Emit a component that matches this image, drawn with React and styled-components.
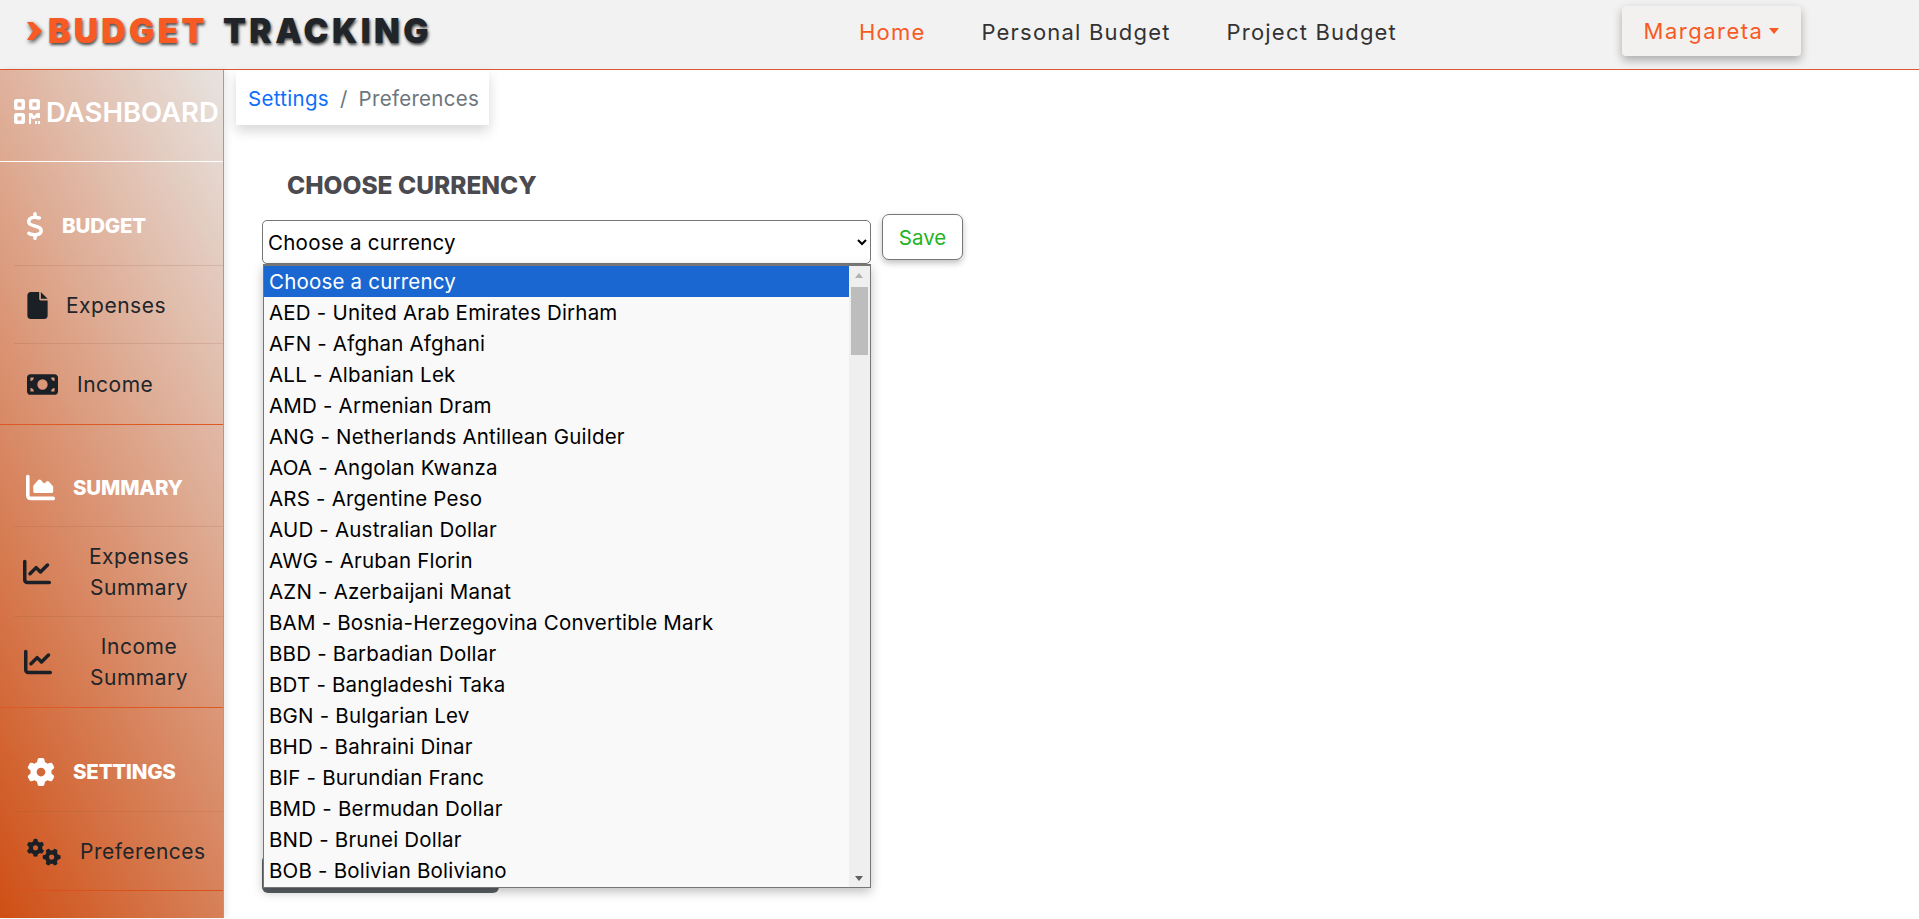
import React from 'react'
import styled, { createGlobalStyle } from 'styled-components'
import { FaDollarSign, FaFile, FaMoneyBill, FaChartArea, FaChartLine, FaGear, FaGears } from 'react-icons/fa6'

const GlobalStyle = createGlobalStyle`
  html, body { margin: 0; padding: 0; background: #fff; }
  body { font-family: Inter, "Noto Sans", sans-serif; color: #212529; overflow: hidden; }
  * { box-sizing: border-box; }
`
const Page = styled.div`
  width: 1919px;
  height: 919px;
  display: flex;
  flex-direction: column;
`
const Header = styled.header`
  height: 70px;
  flex: none;
  display: flex;
  align-items: center;
  background: #f2f2f2;
  border-bottom: 1px solid #e2582c;
`
const Logo = styled.div`
  width: 800px;
  padding: 0 0 8px 27px;
  display: flex;
  align-items: center;
  font-size: 33.5px;
  font-weight: 900;
  letter-spacing: 3.4px;
  white-space: nowrap;
  color: #212529;
  text-shadow: 1px 2px 3px rgba(0, 0, 0, 0.7);
  span { color: #f85a24; margin-right: 15px; }
  svg { margin-right: 6px; filter: drop-shadow(1px 2px 2px rgba(0, 0, 0, 0.7)); }
`
const NavLinks = styled.nav`
  display: flex;
  gap: 56px;
  width: 763px;
  padding: 0 0 6px 59px;
`
const NavLink = styled.a`
  font-size: 22px;
  letter-spacing: 1.2px;
  color: ${p => (p.$active ? '#f85a24' : '#333')};
`
const UserButton = styled.button`
  margin-left: 59px;
  width: 179px;
  height: 50px;
  margin-bottom: 7px;
  border: none;
  border-radius: 4px;
  background: #f3f1ef;
  color: #f85a24;
  font: inherit;
  font-size: 22px;
  letter-spacing: 1.5px;
  box-shadow: 0 4px 10px rgba(0, 0, 0, 0.3);
  display: flex;
  align-items: center;
  justify-content: center;
  gap: 6px;
  &::after {
    content: '';
    border-top: 6px solid #f85a24;
    border-left: 5.5px solid transparent;
    border-right: 5.5px solid transparent;
  }
`
const Body = styled.div`
  flex: 1;
  display: flex;
  min-height: 0;
`
const Sidebar = styled.aside`
  width: 224px;
  height: 848px;
  flex: none;
  border-right: 1px solid #a39d99;
  box-shadow: 3px 0 6px rgba(0, 0, 0, 0.08);
  background: linear-gradient(62deg, #cf4f15, #e7e3e0);
`
const BrandRow = styled.div`
  height: 92px;
  display: flex;
  align-items: center;
  padding: 0 0 8px 14px;
  gap: 6px;
  color: #fff;
  font-size: 27.5px;
  font-weight: 600;
  white-space: nowrap;
  border-bottom: 1px solid #fff;
`
const Section = styled.div`
  border-bottom: ${p => (p.$last ? '2px solid transparent' : '1px solid #de5a25')};
`
const Row = styled.div`
  height: ${p => p.$h}px;
  margin-left: 14px;
  display: flex;
  align-items: center;
  padding-left: ${p => p.$pad}px;
  padding-top: ${p => (p.$title ? 24 : 1)}px;
  border-bottom: 1px solid ${p => p.$line || 'rgba(150, 90, 60, 0.18)'};
`
const Title = styled.div`
  margin-left: ${p => p.$gap}px;
  font-size: 20.5px;
  font-weight: 800;
  color: #fff;
  letter-spacing: -0.2px;
`
const ItemLabel = styled.div`
  margin-left: ${p => p.$gap}px;
  width: ${p => (p.$w ? `${p.$w}px` : 'auto')};
  font-size: 21px;
  letter-spacing: 0.5px;
  line-height: 31px;
  text-align: center;
  color: #212529;
`
const Main = styled.main`
  flex: 1;
  position: relative;
  padding-left: 12px;
`
const Crumbs = styled.div`
  width: 253px;
  height: 55px;
  display: flex;
  align-items: center;
  padding: 2px 0 0 12px;
  background: #fff;
  font-size: 20.5px;
  letter-spacing: 0.3px;
  box-shadow: 0 6px 12px rgba(0, 0, 0, 0.16);
`
const CrumbLink = styled.a`
  color: #0d6efd;
`
const CrumbSep = styled.span`
  margin: 0 11px;
  color: #6c757d;
`
const CrumbNow = styled.span`
  color: #6c757d;
`
const Heading = styled.h2`
  margin: 45px 0 0 51px;
  height: 30px;
  line-height: 30px;
  font-size: 24.5px;
  font-weight: 800;
  color: #4a4a50;
`
const FormRow = styled.div`
  margin: 20px 0 0 26px;
  display: flex;
  align-items: flex-start;
  position: relative;
`
const CurrencySelect = styled.select`
  width: 609px;
  height: 44px;
  padding-left: 1px;
  border: 1px solid #767676;
  border-radius: 5px;
  background: #fff;
  color: #000;
  font-family: inherit;
  font-size: 20.5px;
  letter-spacing: 0.25px;
`
const SaveButton = styled.button`
  width: 81px;
  height: 46px;
  margin: -6px 0 0 11px;
  border: 1px solid #777;
  border-radius: 7px;
  background: #fff;
  color: #1fb31f;
  font-family: inherit;
  font-size: 20.5px;
  box-shadow: 0 3px 6px rgba(0, 0, 0, 0.25);
`
const HiddenButton = styled.div`
  position: absolute;
  left: 0;
  top: 635px;
  width: 237px;
  height: 38px;
  border-radius: 6px;
  background: #5c6167;
`
const OptionList = styled.div`
  position: absolute;
  left: 1px;
  top: 44px;
  width: 608px;
  height: 624px;
  display: flex;
  background: #f9f9f9;
  border: 1px solid #767676;
  border-top-width: 2px;
  box-shadow: 0 4px 10px rgba(0, 0, 0, 0.25);
`
const Options = styled.div`
  flex: 1;
  min-width: 0;
`
const Option = styled.div`
  height: 31px;
  line-height: 31px;
  padding-left: 5px;
  font-size: 20.5px;
  letter-spacing: 0.2px;
  white-space: nowrap;
  color: ${p => (p.$selected ? '#fff' : '#000')};
  background: ${p => (p.$selected ? '#1a67d2' : 'transparent')};
`
const ScrollTrack = styled.div`
  width: 21px;
  flex: none;
  position: relative;
  background: #efefef;
`
const ScrollThumb = styled.div`
  position: absolute;
  left: 2px;
  top: 21px;
  width: 17px;
  height: 68px;
  background: #bdbdbd;
`
const ScrollArrow = styled.div`
  position: absolute;
  left: 6px;
  ${p => (p.$down ? 'bottom: 6px;' : 'top: 7px;')}
  border-left: 4.5px solid transparent;
  border-right: 4.5px solid transparent;
  ${p => (p.$down ? 'border-top: 5px solid #5f5f5f;' : 'border-bottom: 5px solid #b0b0b0;')}
`

const currencies = [
  'AED - United Arab Emirates Dirham',
  'AFN - Afghan Afghani',
  'ALL - Albanian Lek',
  'AMD - Armenian Dram',
  'ANG - Netherlands Antillean Guilder',
  'AOA - Angolan Kwanza',
  'ARS - Argentine Peso',
  'AUD - Australian Dollar',
  'AWG - Aruban Florin',
  'AZN - Azerbaijani Manat',
  'BAM - Bosnia-Herzegovina Convertible Mark',
  'BBD - Barbadian Dollar',
  'BDT - Bangladeshi Taka',
  'BGN - Bulgarian Lev',
  'BHD - Bahraini Dinar',
  'BIF - Burundian Franc',
  'BMD - Bermudan Dollar',
  'BND - Brunei Dollar',
  'BOB - Bolivian Boliviano',
]

const LogoArrow = () => (
  <svg width="15" height="18" viewBox="0 0 15 18">
    <path d="M0 0h6l9 9-9 9H0l6-9z" fill="#f85a24" />
  </svg>
)

const ScanIcon = () => (
  <svg width="26" height="25" viewBox="0 0 26 25" fill="#fff" fillRule="evenodd">
    <path d="M2.5 0h6A2.5 2.5 0 0 1 11 2.5v6A2.5 2.5 0 0 1 8.500 11h-6A2.500 2.500 0 0 1 0 8.500v-6A2.500 2.500 0 0 1 2.500 0zM3.500 3.500v4h4v-4z" />
    <path d="M17.500 0h6A2.500 2.500 0 0 1 26 2.500v6a2.500 2.500 0 0 1-2.500 2.500h-6A2.500 2.500 0 0 1 15 8.500v-6A2.500 2.500 0 0 1 17.500 0zM18.500 3.500v4h4v-4z" />
    <path d="M2.500 14h6a2.500 2.500 0 0 1 2.500 2.500v6A2.500 2.500 0 0 1 8.500 25h-6A2.500 2.500 0 0 1 0 22.500v-6A2.500 2.500 0 0 1 2.500 14zM3.500 17.500v4h4v-4z" />
    <path d="M15 14h3l2 3 3-3h3v5h-3v-1l-2 2h-3l-1-2v7h-2zM21 22h2v3h-2zM24 22h2v3h-2z" />
  </svg>
)

const App = () => {
  return (
    <Page>
      <GlobalStyle />
      <Header>
        <Logo><LogoArrow /><span>BUDGET</span>TRACKING</Logo>
        <NavLinks>
          <NavLink $active>Home</NavLink>
          <NavLink>Personal Budget</NavLink>
          <NavLink>Project Budget</NavLink>
        </NavLinks>
        <UserButton>Margareta</UserButton>
      </Header>
      <Body>
        <Sidebar>
          <BrandRow><ScanIcon />DASHBOARD</BrandRow>
          <Section>
            <Row $h={104} $pad={7} $title>
              <FaDollarSign size={28} color="#fff" />
              <Title $gap={13}>BUDGET</Title>
            </Row>
            <Row $h={78} $pad={10}>
              <FaFile size={27} color="#1a2025" />
              <ItemLabel $gap={15}>Expenses</ItemLabel>
            </Row>
            <Row $h={80} $pad={13} $line="transparent">
              <FaMoneyBill size={31} color="#1a2025" />
              <ItemLabel $gap={19}>Income</ItemLabel>
            </Row>
          </Section>
          <Section>
            <Row $h={102} $pad={12} $title>
              <FaChartArea size={29} color="#fff" />
              <Title $gap={18}>SUMMARY</Title>
            </Row>
            <Row $h={90} $pad={9}>
              <FaChartLine size={28} color="#1a2025" />
              <ItemLabel $gap={23} $w={130}>Expenses Summary</ItemLabel>
            </Row>
            <Row $h={90} $pad={10} $line="transparent">
              <FaChartLine size={28} color="#1a2025" />
              <ItemLabel $gap={22} $w={130}>Income Summary</ItemLabel>
            </Row>
          </Section>
          <Section $last>
            <Row $h={104} $pad={13} $title>
              <FaGear size={28} color="#fff" />
              <Title $gap={18}>SETTINGS</Title>
            </Row>
            <Row $h={79} $pad={13} $line="#d8531b">
              <FaGears size={34} color="#1a2025" />
              <ItemLabel $gap={19}>Preferences</ItemLabel>
            </Row>
          </Section>
        </Sidebar>
        <Main>
          <Crumbs>
            <CrumbLink>Settings</CrumbLink>
            <CrumbSep>/</CrumbSep>
            <CrumbNow>Preferences</CrumbNow>
          </Crumbs>
          <Heading>CHOOSE CURRENCY</Heading>
          <FormRow>
            <CurrencySelect><option>Choose a currency</option></CurrencySelect>
            <SaveButton>Save</SaveButton>
            <HiddenButton />
            <OptionList>
              <Options>
                <Option $selected>Choose a currency</Option>
                {currencies.map(c => <Option key={c}>{c}</Option>)}
              </Options>
              <ScrollTrack>
                <ScrollArrow />
                <ScrollThumb />
                <ScrollArrow $down />
              </ScrollTrack>
            </OptionList>
          </FormRow>
        </Main>
      </Body>
    </Page>
  )
}

export default App
